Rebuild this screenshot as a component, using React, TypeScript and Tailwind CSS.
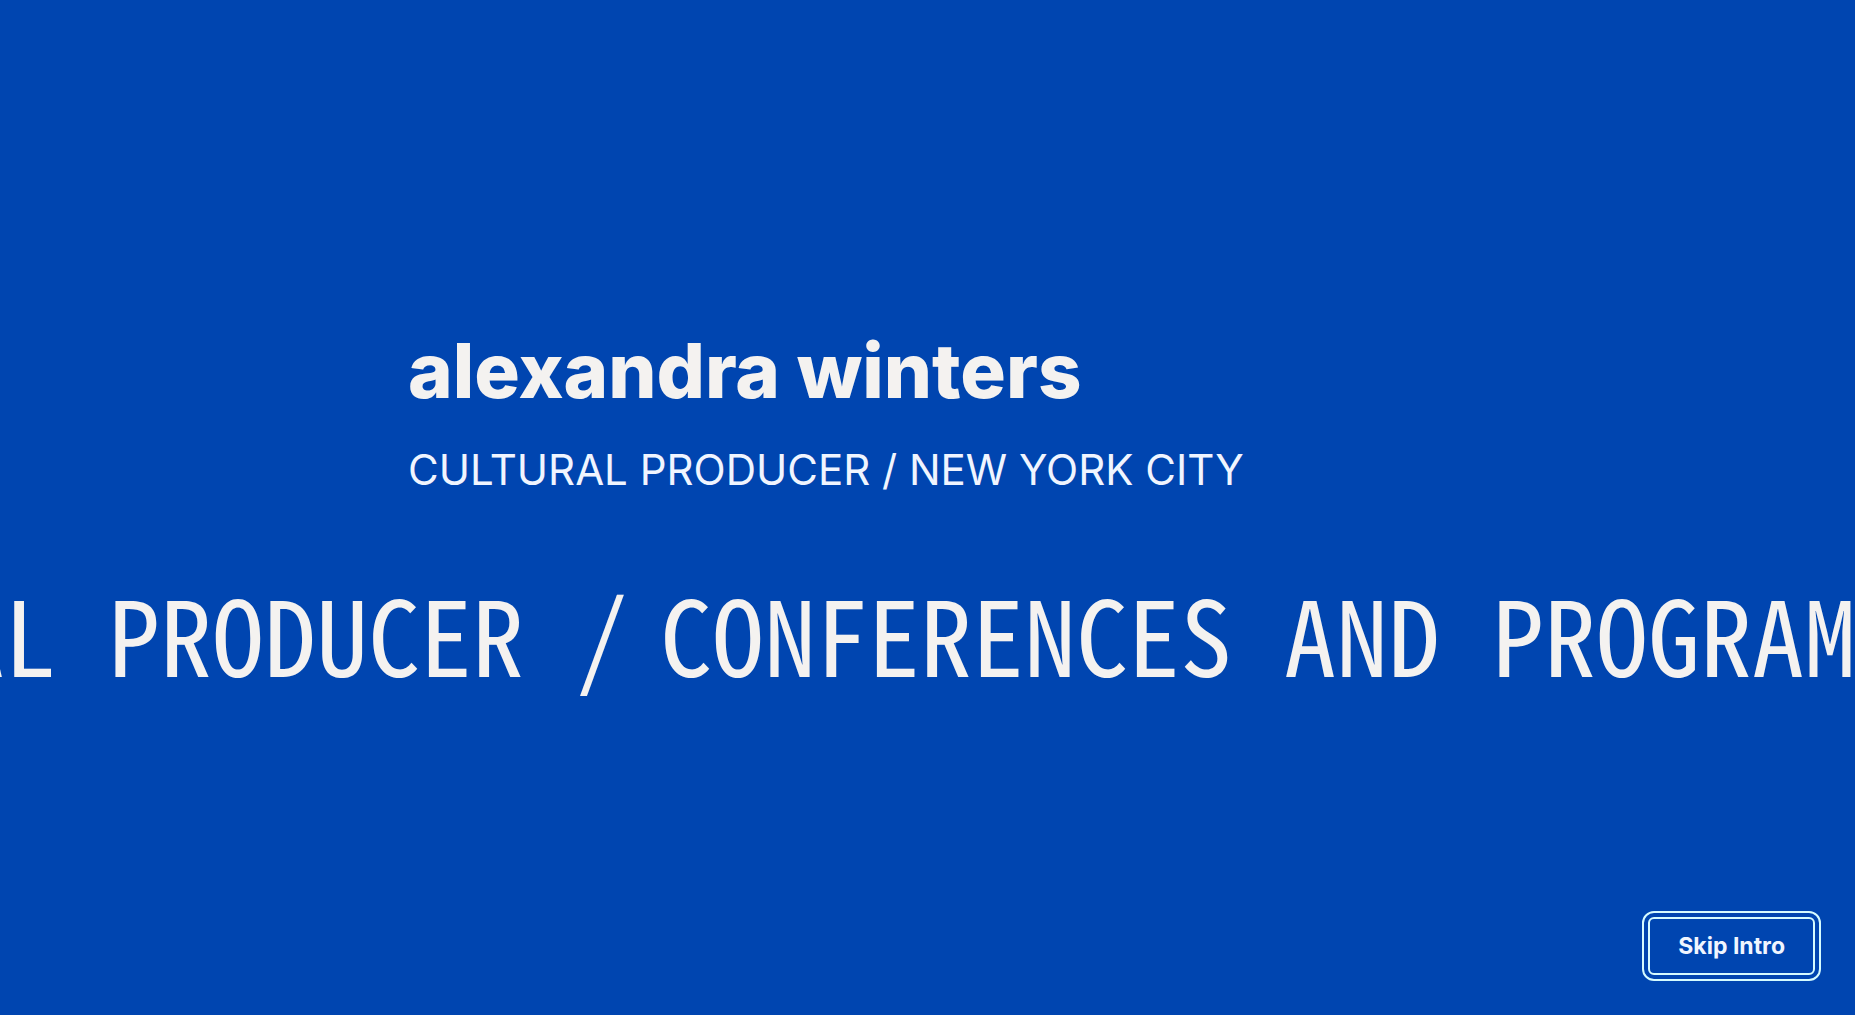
const marqueeItems = ['CULTURAL PRODUCER /', 'CONFERENCES AND PROGRAMS /']

function Marquee() {
  return (
    <div className="w-full overflow-x-clip">
      <div className="-ml-[360px] flex w-max gap-8 whitespace-pre font-['Noto_Sans_Mono_CJK_JP','DejaVu_Sans_Mono',monospace] text-[104px] leading-[108px] font-medium text-[#f4f2f0]">
        {marqueeItems.map(item => (
          <span key={item}>{item}</span>
        ))}
      </div>
    </div>
  )
}

export default function App() {
  return (
    <div className="relative flex min-h-screen flex-col justify-center bg-[#0045b0] font-[Inter,sans-serif]">
      <main>
        <header className="pl-[22%]">
          <h1 className="text-[76px] leading-[80px] font-extrabold text-[#f4f2f0]">alexandra winters</h1>
          <p className="mt-8 text-[42px] leading-[56px] text-[#f0f5ff]">CULTURAL PRODUCER / NEW YORK CITY</p>
        </header>
        <div className="mt-20">
          <Marquee />
        </div>
      </main>

      <button
        type="button"
        className="absolute right-[34px] bottom-[34px] cursor-pointer rounded-xl border-2 border-[#d5fbff] p-1"
      >
        <span className="block rounded-md border-2 border-[#d5fbff] px-7 py-3 text-[23px] leading-[30px] font-bold text-[#f0f5ff]">
          Skip Intro
        </span>
      </button>
    </div>
  )
}
